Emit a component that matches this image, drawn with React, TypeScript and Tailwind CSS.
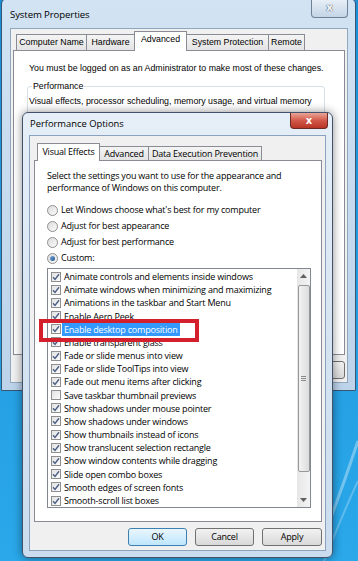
import React from "react";

const items = [
  { label: "Animate controls and elements inside windows", on: true },
  { label: "Animate windows when minimizing and maximizing", on: true },
  { label: "Animations in the taskbar and Start Menu", on: true },
  { label: "Enable Aero Peek", on: true },
  { label: "Enable desktop composition", on: true, selected: true },
  { label: "Enable transparent glass", on: true },
  { label: "Fade or slide menus into view", on: true },
  { label: "Fade or slide ToolTips into view", on: true },
  { label: "Fade out menu items after clicking", on: true },
  { label: "Save taskbar thumbnail previews", on: false },
  { label: "Show shadows under mouse pointer", on: true },
  { label: "Show shadows under windows", on: true },
  { label: "Show thumbnails instead of icons", on: true },
  { label: "Show translucent selection rectangle", on: true },
  { label: "Show window contents while dragging", on: true },
  { label: "Slide open combo boxes", on: true },
  { label: "Smooth edges of screen fonts", on: true },
  { label: "Smooth-scroll list boxes", on: true },
];

const Check = ({ on }: { on: boolean }) => (
  <div className="w-[10px] h-[10px] shrink-0 border border-[#8f8f8f] bg-gradient-to-br from-[#e2e2e2] to-[#fbfbfb] flex items-center justify-center">
    {on && (
      <svg width="8" height="8" viewBox="0 0 8 8">
        <path d="M1 4.2 L3 6.4 L7 1.2" fill="none" stroke="#4c5f86" strokeWidth="1.4" />
      </svg>
    )}
  </div>
);

const Radio = ({ on, label }: { on?: boolean; label: string }) => (
  <div className="h-[16px] flex items-center gap-[3px]">
    <div className="w-[11px] h-[11px] rounded-full border border-[#8f8f8f] bg-gradient-to-br from-[#dcdcdc] to-[#fafafa] flex items-center justify-center">
      {on && <div className="w-[5px] h-[5px] rounded-full bg-gradient-to-br from-[#7fb0e0] to-[#1d4f8a]" />}
    </div>
    <span>{label}</span>
  </div>
);

const Btn = ({ label, w, primary }: { label: string; w: string; primary?: boolean }) => (
  <div
    className={`${w} h-[18px] rounded-[3px] border flex items-center justify-center ${
      primary
        ? "border-[#3c7fb1] bg-gradient-to-b from-[#eaf6fd] to-[#bee6fd]"
        : "border-[#707070] bg-gradient-to-b from-[#f2f2f2] to-[#d9d9d9]"
    }`}
  >
    {label}
  </div>
);

export default function App() {
  const seg = "font-['Open_Sans','Noto_Sans',sans-serif] text-[9px] tracking-[-0.2px] text-black whitespace-nowrap";
  const tah = "font-['Liberation_Sans',Arial,sans-serif] text-[8.8px] text-black whitespace-nowrap";

  return (
    <div className="relative w-[358px] h-[561px] overflow-hidden bg-gradient-to-b from-[#1a8fd6] to-[#2aa8ea]">
      {/* desktop streaks */}
      <svg className="absolute right-0 bottom-0" width="40" height="180" viewBox="0 0 40 180">
        <path d="M0 170 Q20 120 40 60" stroke="#ffffff" strokeOpacity="0.35" strokeWidth="3" fill="none" />
        <path d="M6 180 Q26 130 40 100" stroke="#ffffff" strokeOpacity="0.25" strokeWidth="2" fill="none" />
      </svg>

      {/* System Properties window */}
      <div className="absolute left-[1px] top-[-2px] w-[355px] h-[393px] rounded-t-[6px] border border-[#3a5675] bg-gradient-to-b from-[#d2e3f3] to-[#bcd3ea] flex flex-col pl-[8px] pr-[7px] pb-[7px]">
        <div className="relative h-[29px] flex items-center pt-[3px]">
          <span className="font-['Open_Sans',sans-serif] text-[9.6px] tracking-[-0.1px] text-black">System Properties</span>
          <div className="absolute top-0 right-[0px] w-[37px] h-[19px] rounded-b-[4px] border border-t-0 border-[#6f8196] bg-gradient-to-b from-[#e9f0f8] to-[#c4d5e6] flex items-center justify-center">
            <span className="font-['DejaVu_Sans',sans-serif] text-[11px] font-bold text-[#f4f7fa] [text-shadow:0_0_1px_#3c4a5a,0_0_1px_#3c4a5a]">x</span>
          </div>
        </div>
        <div className={`flex-1 bg-[#f0f0f0] border border-[#91a7be] flex flex-col px-[2px] pt-[2px] ${tah}`}>
          <div className="h-[19px] flex items-end pl-[3px]">
            <div className="h-[16px] w-[71px] border border-b-0 border-[#898c95] bg-gradient-to-b from-[#f4f4f4] to-[#e4e4e4] flex items-center justify-center">Computer Name</div>
            <div className="h-[16px] w-[49px] -ml-px border border-b-0 border-[#898c95] bg-gradient-to-b from-[#f4f4f4] to-[#e4e4e4] flex items-center justify-center">Hardware</div>
            <div className="relative z-10 h-[20px] w-[53px] -ml-px -mb-px border border-b-0 border-[#898c95] bg-white flex items-center justify-center pb-[3px]">Advanced</div>
            <div className="h-[16px] w-[83px] -ml-px border border-b-0 border-[#898c95] bg-gradient-to-b from-[#f4f4f4] to-[#e4e4e4] flex items-center justify-center">System Protection</div>
            <div className="h-[16px] w-[37px] -ml-px border border-b-0 border-[#898c95] bg-gradient-to-b from-[#f4f4f4] to-[#e4e4e4] flex items-center justify-center">Remote</div>
          </div>
          <div className="h-[305px] bg-white border border-[#898c95] flex flex-col pl-[13px] pr-[19px] pt-[11px]">
            <div className="h-[12px] leading-[12px] pl-[2px]">You must be logged on as an Administrator to make most of these changes.</div>
            <fieldset className="mt-[6px] h-[90px] border border-[#d5dfe5] rounded-[3px] px-[1px]">
              <legend className="ml-[3px] px-[1px] leading-[12px]">Performance</legend>
              <div className="leading-[12px] mt-[3px]">Visual effects, processor scheduling, memory usage, and virtual memory</div>
            </fieldset>
          </div>
          <div className="mt-[6px] flex justify-end gap-[8px]">
            <Btn label="Cancel" w="w-[60px]" />
            <Btn label="Apply" w="w-[60px]" />
          </div>
        </div>
      </div>

      {/* Performance Options dialog */}
      <div className="absolute left-[22px] top-[112px] w-[311px] h-[446px] rounded-[6px] border border-[#41526a] bg-gradient-to-b from-[#e6eff8] via-[#d6e4f1] to-[#cadcee] shadow-[0_0_10px_rgba(0,0,0,0.45)] flex flex-col px-[6px] pb-[6px]">
        <div className="relative h-[22px] flex items-center pl-[1px]">
          <span className="font-['Open_Sans',sans-serif] text-[9.4px] text-black">Performance Options</span>
          <div className="absolute top-0 right-[-2px] w-[38px] h-[16px] rounded-b-[4px] border border-t-0 border-[#6b2a24] bg-gradient-to-b from-[#e9a497] via-[#d2584a] to-[#b83426] flex items-center justify-center">
            <span className="font-['DejaVu_Sans',sans-serif] text-[10px] font-bold text-white leading-none">x</span>
          </div>
        </div>
        <div className={`flex-1 bg-[#f0f0f0] border border-[#8aa2bd] flex flex-col pl-[4px] pr-[3px] pt-[7px] ${seg}`}>
          <div className="h-[17px] flex items-end pl-[3px]">
            <div className="relative z-10 h-[18px] w-[63px] -mb-px border border-b-0 border-[#898c95] bg-white flex items-center justify-center pb-[1px]">Visual Effects</div>
            <div className="h-[14px] w-[50px] -ml-px border border-b-0 border-[#898c95] bg-gradient-to-b from-[#f4f4f4] to-[#e4e4e4] flex items-center justify-center">Advanced</div>
            <div className="h-[14px] w-[114px] -ml-px border border-b-0 border-[#898c95] bg-gradient-to-b from-[#f4f4f4] to-[#e4e4e4] flex items-center justify-center">Data Execution Prevention</div>
          </div>
          <div className="relative h-[362px] bg-white border border-[#898c95] flex flex-col pl-[12px] pt-[9px]">
            <div className="leading-[12px]">
              <div>Select the settings you want to use for the appearance and</div>
              <div>performance of Windows on this computer.</div>
            </div>
            <div className="mt-[8px] flex flex-col">
              <Radio label="Let Windows choose what's best for my computer" />
              <Radio label="Adjust for best appearance" />
              <Radio label="Adjust for best performance" />
              <Radio on label="Custom:" />
            </div>
            <div className="mt-[2px] w-[264px] h-[240px] border border-[#828790] bg-white flex">
              <div className="flex-1 flex flex-col pt-[1px]">
                {items.map((it) => (
                  <div key={it.label} className="h-[13.2px] flex items-center pl-[3px] gap-[3px]">
                    <Check on={it.on} />
                    <span className={it.selected ? "bg-[#3399ff] text-white px-[2px] -ml-[2px] leading-[13px]" : "leading-[13px]"}>{it.label}</span>
                  </div>
                ))}
              </div>
              <div className="w-[13px] bg-gradient-to-r from-[#e6e6e6] to-[#f4f4f4] flex flex-col items-center py-[1px]">
                <div className="h-[12px] flex items-center justify-center">
                  <svg width="7" height="4" viewBox="0 0 7 4"><path d="M0 4 L3.5 0 L7 4 Z" fill="#606060" /></svg>
                </div>
                <div className="mt-[3px] w-[12px] h-[187px] rounded-[2px] border border-[#979797] bg-gradient-to-r from-[#f3f3f3] to-[#dcdcdc] flex flex-col items-center justify-center gap-[1px]">
                  <div className="w-[5px] h-px bg-[#8a8a8a]" />
                  <div className="w-[5px] h-px bg-[#8a8a8a]" />
                  <div className="w-[5px] h-px bg-[#8a8a8a]" />
                </div>
                <div className="flex-1" />
                <div className="h-[12px] flex items-center justify-center">
                  <svg width="7" height="4" viewBox="0 0 7 4"><path d="M0 0 L3.5 4 L7 0 Z" fill="#606060" /></svg>
                </div>
              </div>
            </div>
            {/* red callout */}
            <div className="absolute left-[4px] top-[158px] w-[160px] h-[23px] border-[4px] border-[#d3202c]" />
          </div>
          <div className="mt-[6px] flex justify-end gap-[8px]">
            <Btn label="OK" w="w-[59px]" primary />
            <Btn label="Cancel" w="w-[59px]" />
            <Btn label="Apply" w="w-[60px]" />
          </div>
        </div>
      </div>
    </div>
  );
}
